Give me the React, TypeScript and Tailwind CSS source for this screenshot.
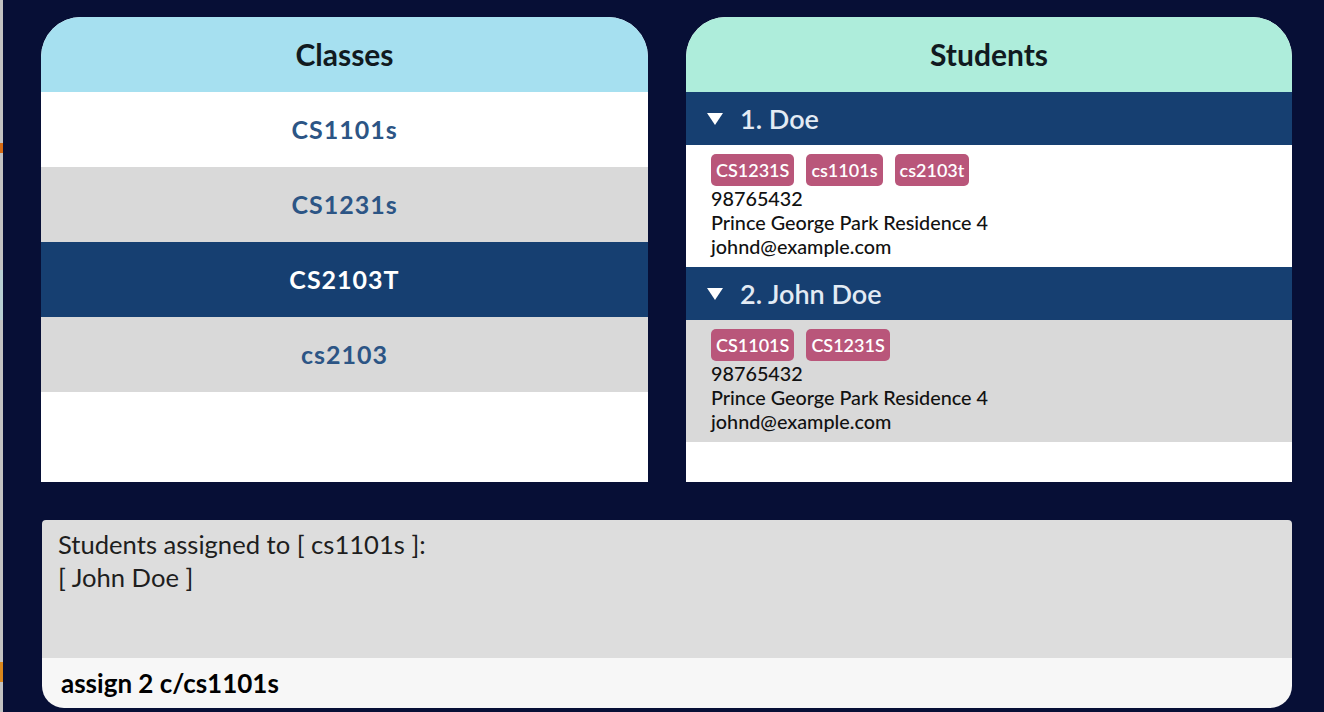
const classes = [
  { name: 'CS1101s', bg: 'bg-white', text: 'text-[#2c5585]' },
  { name: 'CS1231s', bg: 'bg-[#d9d9d9]', text: 'text-[#2c5585]' },
  { name: 'CS2103T', bg: 'bg-[#163f71]', text: 'text-white' },
  { name: 'cs2103', bg: 'bg-[#d9d9d9]', text: 'text-[#2c5585]' },
];

const students = [
  { name: '1. Doe', tags: ['CS1231S', 'cs1101s', 'cs2103t'], bg: 'bg-white' },
  { name: '2. John Doe', tags: ['CS1101S', 'CS1231S'], bg: 'bg-[#d9d9d9]' },
];

function StudentCard({ s }: { s: (typeof students)[number] }) {
  return (
    <div>
      <div className="h-[53px] bg-[#163f71] flex items-center pl-[21px] text-[#e3ebf4]">
        <svg width="16" height="14" viewBox="0 0 16 14" className="mr-[17px] mt-[1px]">
          <polygon points="0,1 16,1 8,13" fill="#ffffff" />
        </svg>
        <span className="text-[27px] font-semibold leading-none">{s.name}</span>
      </div>
      <div className={`${s.bg} pl-[25px] pt-[9px] pb-[9px] h-[122px]`}>
        <div className="flex gap-[12px] h-[32px]">
          {s.tags.map((t) => (
            <span
              key={t}
              className="bg-[#b9567a] text-white text-[18px] font-semibold rounded-[5px] px-[5px] flex items-center leading-none"
            >
              {t}
            </span>
          ))}
        </div>
        <div className="text-[19.8px] leading-[24px] font-medium text-[#111]">
          <div>98765432</div>
          <div>Prince George Park Residence 4</div>
          <div>johnd@example.com</div>
        </div>
      </div>
    </div>
  );
}

export default function App() {
  return (
    <div
      className="w-[1324px] h-[712px] bg-[#070f36] flex overflow-hidden"
      style={{ fontFamily: 'Lato, "Open Sans", sans-serif' }}
    >
      <div className="w-[3px] bg-[#c2c2c2] flex flex-col shrink-0">
        <div className="h-[143px]" />
        <div className="h-[10px] bg-[#d66a12]" />
        <div className="h-[117px] bg-[#c2c2c2]" />
        <div className="h-[50px] bg-[#b7cfd3]" />
        <div className="flex-1" />
        <div className="h-[20px] bg-[#d9861c]" />
        <div className="h-[30px]" />
      </div>

      <div className="flex-1 pl-[38px] pr-[32px] pt-[17px] pb-[4px] flex flex-col">
        <div className="flex gap-[38px] h-[465px]">
          {/* Classes */}
          <div className="w-[607px] bg-white rounded-t-[40px] overflow-hidden flex flex-col">
            <div className="h-[75px] bg-[#a6e0f0] flex items-center justify-center">
              <span className="text-[30px] font-bold text-[#111a1f]">Classes</span>
            </div>
            {classes.map((c) => (
              <div
                key={c.name}
                className={`h-[75px] ${c.bg} flex items-center justify-center`}
              >
                <span className={`text-[25px] tracking-[1px] font-bold ${c.text}`}>{c.name}</span>
              </div>
            ))}
          </div>

          {/* Students */}
          <div className="w-[606px] bg-white rounded-t-[40px] overflow-hidden flex flex-col">
            <div className="h-[75px] bg-[#aeeddb] flex items-center justify-center">
              <span className="text-[30px] font-bold text-[#111a1f]">Students</span>
            </div>
            {students.map((s) => (
              <StudentCard key={s.name} s={s} />
            ))}
          </div>
        </div>

        <div className="mt-[38px] ml-[1px] flex-1 rounded-t-[4px] rounded-b-[22px] overflow-hidden flex flex-col">
          <div className="h-[138px] bg-[#dddddd] px-[16px] pt-[8px] text-[25.6px] leading-[33px] text-[#1e1e1e]">
            <div>Students assigned to [ cs1101s ]:</div>
            <div>[ John Doe ]</div>
          </div>
          <div className="flex-1 bg-[#f7f7f7] flex items-center pl-[19px]">
            <span className="text-[26px] font-bold text-black">assign 2 c/cs1101s</span>
          </div>
        </div>
      </div>
    </div>
  );
}
